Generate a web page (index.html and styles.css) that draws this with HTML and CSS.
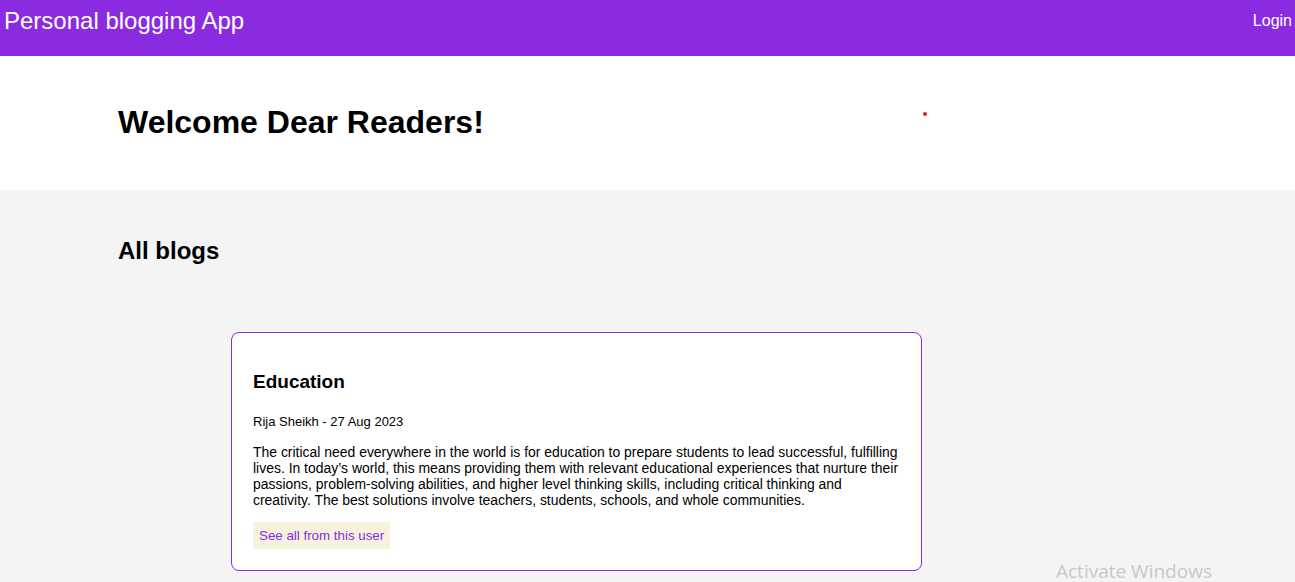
FILE: index.html
```html
<!DOCTYPE html>
<html>
<head>
<meta charset="utf-8">
<link rel="stylesheet" href="styles.css">
</head>
<body>
<header class="navbar">
  <div class="brand">Personal blogging App</div>
  <a class="login" href="#">Login</a>
</header>
<section class="hero">
  <h1 class="hero-title">Welcome Dear Readers!</h1>
  <span class="dot"></span>
</section>
<main class="blogs">
  <h2 class="blogs-title">All blogs</h2>
  <article class="card">
    <h3 class="card-title">Education</h3>
    <p class="card-meta">Rija Sheikh - 27 Aug 2023</p>
    <p class="card-text">The critical need everywhere in the world is for education to prepare students to lead successful, fulfilling lives. In today’s world, this means providing them with relevant educational experiences that nurture their passions, problem-solving abilities, and higher level thinking skills, including critical thinking and creativity. The best solutions involve teachers, students, schools, and whole communities.</p>
    <a class="card-link" href="#">See all from this user</a>
  </article>
</main>
<div class="watermark">Activate Windows</div>
</body>
</html>
```
FILE: styles.css
```css
html, body {
  margin: 0;
  padding: 0;
}
body {
  font-family: "Liberation Sans", Arial, sans-serif;
  background: #f4f4f4;
  color: #000;
  height: 582px;
  overflow: hidden;
  position: relative;
}
.navbar {
  height: 56px;
  background: #8a2be2;
  display: flex;
  justify-content: space-between;
  align-items: flex-start;
  padding: 0 3px 0 4px;
  color: #fff;
}
.brand {
  font-size: 24px;
  line-height: 24px;
  margin-top: 9px;
}
.login {
  color: #fff;
  text-decoration: none;
  font-size: 16px;
  line-height: 16px;
  margin-top: 13px;
}
.hero {
  background: #fff;
  height: 134px;
  padding: 0 118px;
  position: relative;
  box-sizing: border-box;
  display: flex;
  align-items: flex-start;
}
.hero-title {
  margin: 48px 0 0;
  font-size: 32px;
  line-height: 37px;
  font-weight: bold;
}
.dot {
  position: absolute;
  left: 923px;
  top: 56px;
  width: 4px;
  height: 4px;
  border-radius: 50%;
  background: #e02020;
}
.blogs {
  padding: 0 118px;
}
.blogs-title {
  margin: 0;
  padding-top: 47px;
  font-size: 24px;
  line-height: 28px;
  font-weight: bold;
}
.card {
  margin: 67px 0 0 113px;
  width: 691px;
  box-sizing: border-box;
  background: #fff;
  border: 1px solid #8a2be2;
  border-radius: 8px;
  padding: 38px 21px 21px;
}
.card-title {
  margin: 0;
  font-size: 19px;
  line-height: 22px;
  font-weight: bold;
}
.card-meta {
  margin: 21px 0 0;
  font-size: 13px;
  line-height: 16px;
}
.card-text {
  margin: 14px 0 0;
  font-size: 13.95px;
  line-height: 16px;
}
.card-link {
  display: inline-block;
  margin-top: 14px;
  background: #f5f3dc;
  color: #8a2be2;
  text-decoration: none;
  font-size: 13.33px;
  line-height: 15px;
  padding: 6px 6px;
}
.watermark {
  position: absolute;
  left: 1056px;
  top: 558px;
  font-family: "Open Sans", "Noto Sans", sans-serif;
  font-size: 19px;
  color: #c8c8c8;
}
```
